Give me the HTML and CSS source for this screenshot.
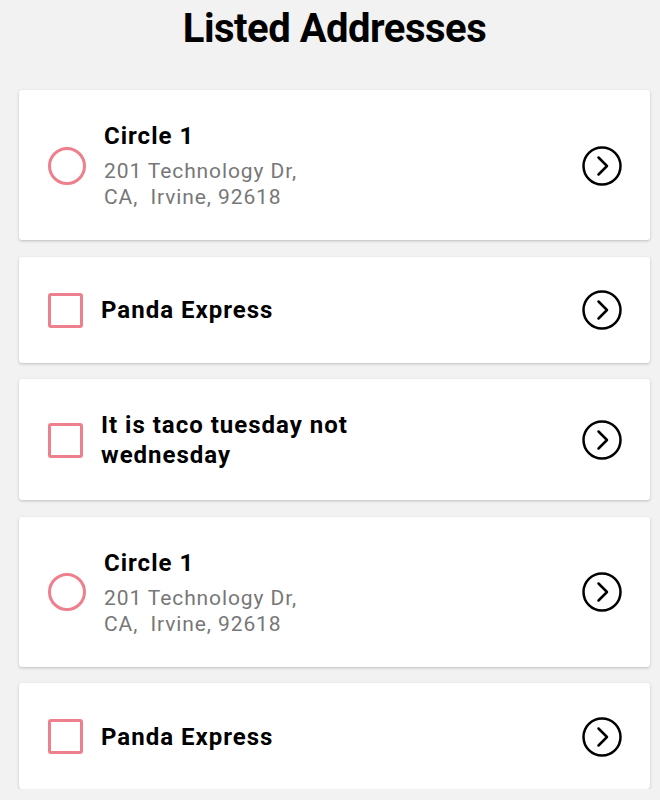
FILE: index.html
```html
<!DOCTYPE html>
<html lang="en">
<head>
    <meta charset="UTF-8">
    <meta name="viewport" content="width=device-width, initial-scale=1.0">
    <title>Listed Addresses</title>
    <link rel="stylesheet" href="styles.css">
</head>
<body>
    <div class="page">
        <h1>Listed Addresses</h1>

        <div class="address-list">
            <div class="address-card">
                <span class="marker circle"></span>
                <div class="details">
                    <div class="name">Circle 1</div>
                    <div class="address">201 Technology Dr,<br>CA,&nbsp; Irvine, 92618</div>
                </div>
                <svg class="go" viewBox="0 0 40 40"><circle cx="20" cy="20" r="18.5"/><polyline points="16.5,11.5 25,20 16.5,28.5"/></svg>
            </div>

            <div class="address-card">
                <span class="marker square"></span>
                <div class="details">
                    <div class="name">Panda Express</div>
                </div>
                <svg class="go" viewBox="0 0 40 40"><circle cx="20" cy="20" r="18.5"/><polyline points="16.5,11.5 25,20 16.5,28.5"/></svg>
            </div>

            <div class="address-card">
                <span class="marker square"></span>
                <div class="details">
                    <div class="name">It is taco tuesday not wednesday</div>
                </div>
                <svg class="go" viewBox="0 0 40 40"><circle cx="20" cy="20" r="18.5"/><polyline points="16.5,11.5 25,20 16.5,28.5"/></svg>
            </div>

            <div class="address-card">
                <span class="marker circle"></span>
                <div class="details">
                    <div class="name">Circle 1</div>
                    <div class="address">201 Technology Dr,<br>CA,&nbsp; Irvine, 92618</div>
                </div>
                <svg class="go" viewBox="0 0 40 40"><circle cx="20" cy="20" r="18.5"/><polyline points="16.5,11.5 25,20 16.5,28.5"/></svg>
            </div>

            <div class="address-card">
                <span class="marker square"></span>
                <div class="details">
                    <div class="name">Panda Express</div>
                </div>
                <svg class="go" viewBox="0 0 40 40"><circle cx="20" cy="20" r="18.5"/><polyline points="16.5,11.5 25,20 16.5,28.5"/></svg>
            </div>
        </div>
    </div>
</body>
</html>
```

FILE: styles.css
```css
body {
    font-family: Roboto, "Liberation Sans", sans-serif;
    background-color: #f2f2f2;
    color: #000;
    margin: 0;
    padding: 0;
}

.page {
    padding: 5px 10px 0 19px;
}

h1 {
    font-size: 40px;
    font-weight: bold;
    line-height: 48px;
    letter-spacing: -0.5px;
    text-align: center;
    margin: 0 0 37px 0;
}

.address-list {
    display: flex;
    flex-direction: column;
    gap: 16.5px;
}

.address-card {
    display: flex;
    align-items: center;
    min-height: 106px;
    box-sizing: border-box;
    padding: 31px 28px 30px 29px;
    background-color: #fff;
    border-radius: 3px;
    box-shadow: 0 1px 3px rgba(0, 0, 0, 0.22);
}

.marker {
    flex: none;
    box-sizing: border-box;
    border: 3px solid #ee7f8c;
}

.marker.circle {
    width: 38px;
    height: 38px;
    border-radius: 50%;
    margin-right: 18px;
}

.marker.square {
    width: 35px;
    height: 35px;
    border-radius: 3px;
    margin-right: 18px;
}

.details {
    flex: 1;
}

.name {
    font-size: 24px;
    font-weight: bold;
    line-height: 30px;
    letter-spacing: 1px;
    max-width: 290px;
}

.address {
    font-size: 21px;
    line-height: 26px;
    letter-spacing: 0.9px;
    color: #777;
    margin-top: 7px;
}

.go {
    flex: none;
    width: 40px;
    height: 40px;
    fill: none;
    stroke: #000;
    stroke-width: 2.5;
    stroke-linecap: round;
    stroke-linejoin: round;
}
```
